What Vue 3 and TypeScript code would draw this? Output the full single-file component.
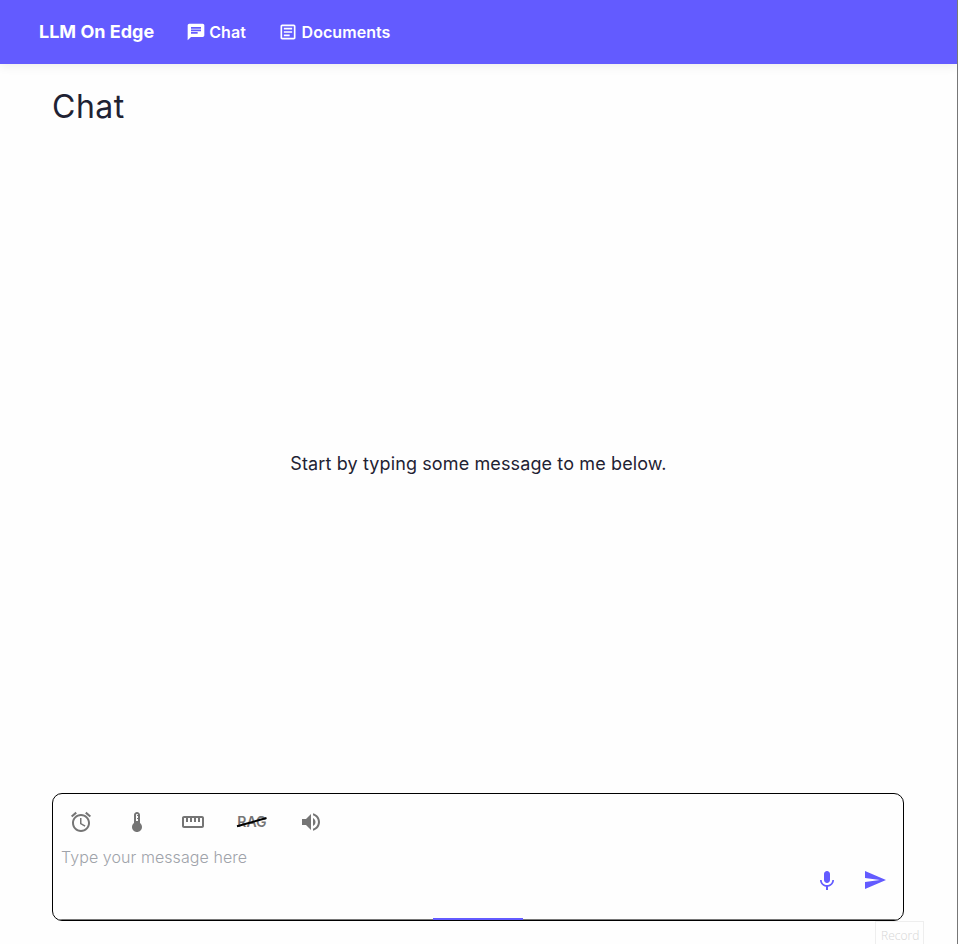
<script setup lang="ts">
import { ref } from 'vue'

interface NavItem {
  label: string
  icon: string
}

interface Tool {
  name: string
  icon: string
}

const navItems: NavItem[] = [
  {
    label: 'Chat',
    icon: 'M20 2H4c-1.1 0-1.99.9-1.99 2L2 22l4-4h14c1.1 0 2-.9 2-2V4c0-1.1-.9-2-2-2zM6 9h12v2H6V9zm8 5H6v-2h8v2zm4-6H6V6h12v2z',
  },
  {
    label: 'Documents',
    icon: 'M19 5v14H5V5h14m0-2H5c-1.1 0-2 .9-2 2v14c0 1.1.9 2 2 2h14c1.1 0 2-.9 2-2V5c0-1.1-.9-2-2-2zM14 17H7v-2h7v2zm3-4H7v-2h10v2zm0-4H7V7h10v2z',
  },
]

const tools: Tool[] = [
  {
    name: 'alarm',
    icon: 'M22 5.72l-4.6-3.86-1.29 1.53 4.6 3.86L22 5.72zM7.88 3.39L6.6 1.86 2 5.71l1.29 1.53 4.59-3.85zM12.5 8H11v6l4.75 2.85.75-1.23-4-2.37V8zM12 4c-4.97 0-9 4.03-9 9s4.02 9 9 9c4.97 0 9-4.03 9-9s-4.03-9-9-9zm0 16c-3.87 0-7-3.13-7-7s3.13-7 7-7 7 3.13 7 7-3.13 7-7 7z',
  },
  {
    name: 'temperature',
    icon: 'M15 13V5c0-1.66-1.34-3-3-3S9 3.34 9 5v8c-1.21.91-2 2.37-2 4 0 2.76 2.24 5 5 5s5-2.24 5-5c0-1.63-.79-3.09-2-4zm-4-8c0-.55.45-1 1-1s1 .45 1 1h-1v1h1v2h-1v1h1v2h-2V5z',
  },
  {
    name: 'length',
    icon: 'M21 6H3c-1.1 0-2 .9-2 2v8c0 1.1.9 2 2 2h18c1.1 0 2-.9 2-2V8c0-1.1-.9-2-2-2zm0 10H3V8h2v4h2V8h2v4h2V8h2v4h2V8h2v4h2V8h2v8z',
  },
  { name: 'rag', icon: '' },
  {
    name: 'volume',
    icon: 'M3 9v6h4l5 5V4L7 9H3zm13.5 3c0-1.77-1.02-3.29-2.5-4.03v8.05c1.48-.73 2.5-2.25 2.5-4.02zM14 3.23v2.06c2.89.86 5 3.54 5 6.71s-2.11 5.85-5 6.71v2.06c4.01-.91 7-4.49 7-8.77s-2.99-7.86-7-8.77z',
  },
]

const message = ref<string>('')
</script>

<template>
  <div class="page">
    <header class="bar">
      <span class="brand">LLM On Edge</span>
      <nav class="nav">
        <a v-for="item in navItems" :key="item.label" class="nav-link">
          <svg viewBox="0 0 24 24" class="nav-icon"><path :d="item.icon" /></svg>
          <span>{{ item.label }}</span>
        </a>
      </nav>
    </header>

    <main class="content">
      <h1 class="title">Chat</h1>
      <section class="empty">Start by typing some message to me below.</section>

      <section class="composer">
        <div class="tools">
          <button v-for="tool in tools" :key="tool.name" class="tool" :class="tool.name" type="button">
            <svg v-if="tool.icon" viewBox="0 0 24 24" class="icon"><path :d="tool.icon" /></svg>
            <template v-else>
              <span>RAG</span>
              <svg viewBox="0 0 32 14" class="strike"><path d="M1 11.3 30.5 3" /></svg>
            </template>
          </button>
        </div>
        <div class="entry">
          <textarea v-model="message" class="input" placeholder="Type your message here"></textarea>
          <div class="actions">
            <button class="action mic" type="button">
              <svg viewBox="0 0 24 24" class="icon">
                <path d="M12 14c1.66 0 2.99-1.34 2.99-3L15 5c0-1.66-1.34-3-3-3S9 3.34 9 5v6c0 1.66 1.34 3 3 3zm5.3-3c0 3-2.54 5.1-5.3 5.1S6.7 14 6.7 11H5c0 3.41 2.72 6.23 6 6.72V21h2v-3.28c3.28-.48 6-3.3 6-6.72h-1.7z" />
              </svg>
            </button>
            <button class="action" type="button">
              <svg viewBox="0 0 24 24" class="icon"><path d="M2.01 21 23 12 2.01 3 2 10l15 2-15 2z" /></svg>
            </button>
          </div>
        </div>
        <div class="track"><span class="progress"></span></div>
      </section>
      <div class="tooltip">Record</div>
    </main>
  </div>
</template>

<style>
body {
  background: #fefefe;
  overflow: hidden;
}
</style>

<style scoped>
.page {
  position: relative;
  box-sizing: border-box;
  width: 100%;
  height: 944px;
  display: flex;
  flex-direction: column;
  overflow: hidden;
  border-right: 1px solid #777;
  color: #1f2233;
  font-family: Inter, sans-serif;
}
.bar {
  flex: none;
  height: 64px;
  box-sizing: border-box;
  padding-left: 39px;
  display: flex;
  align-items: center;
  background: #635bff;
  color: #fff;
  box-shadow: 0 2px 10px rgba(0, 0, 0, 0.08);
}
.brand {
  width: 147px;
  font-size: 18px;
  line-height: 24px;
  font-weight: 700;
  white-space: nowrap;
}
.nav {
  display: flex;
  gap: 32.5px;
}
.nav-link {
  display: flex;
  align-items: center;
  gap: 3.2px;
  font-size: 16px;
  line-height: 24px;
  font-weight: 600;
  letter-spacing: 0.06px;
}
.nav-icon {
  width: 20px;
  height: 20px;
  fill: currentColor;
}
.content {
  flex: 1;
  display: flex;
  flex-direction: column;
  padding: 22px 53px 0 52px;
}
.title {
  margin: 0;
  font-size: 32px;
  line-height: 42px;
  font-weight: 400;
  letter-spacing: 0.5px;
}
.empty {
  box-sizing: border-box;
  height: 665px;
  padding: 6px 0 0 1px;
  display: flex;
  align-items: center;
  justify-content: center;
  font-size: 18px;
  line-height: 26px;
  letter-spacing: 0.12px;
}
.composer {
  box-sizing: border-box;
  width: 852px;
  height: 128px;
  display: flex;
  flex-direction: column;
  overflow: hidden;
  border: 1px solid #000;
  border-radius: 10px;
}
.tools {
  height: 40px;
  padding: 8px 0 0 8px;
  display: flex;
  gap: 16px;
}
button {
  border: 0;
  padding: 0;
  background: none;
  font: inherit;
}
.tool {
  position: relative;
  width: 40px;
  height: 40px;
  display: flex;
  align-items: center;
  justify-content: center;
  color: #757575;
}
.tool.rag {
  width: 46px;
  box-sizing: border-box;
  padding-bottom: 2px;
  font-size: 14px;
  font-weight: 600;
}
.strike {
  position: absolute;
  left: 7px;
  top: 13px;
  width: 32px;
  height: 14px;
  fill: none;
  stroke: #000;
  stroke-width: 2;
}
.icon {
  width: 24px;
  height: 24px;
  fill: currentColor;
}
.entry {
  height: 76px;
  display: flex;
  justify-content: space-between;
}
.input {
  flex: 1;
  height: 60px;
  box-sizing: border-box;
  margin: 0;
  padding: 3px 8px;
  border: 0;
  outline: 0;
  resize: none;
  background: none;
  color: #1f2233;
  font: 300 16px/24px Inter, sans-serif;
  letter-spacing: 0.07px;
}
.input::placeholder {
  color: #9fa3aa;
}
.actions {
  display: flex;
  gap: 8px;
  padding: 18px 8px 0 0;
}
.action {
  width: 40px;
  height: 40px;
  display: flex;
  align-items: center;
  justify-content: center;
  color: #635bff;
}
.action.mic {
  box-sizing: border-box;
  padding-top: 2px;
}
.track {
  height: 2px;
  display: flex;
  align-items: flex-start;
  justify-content: center;
  background: linear-gradient(transparent 50%, #777 50%);
}
.progress {
  width: 90px;
  height: 2px;
  background: #635bff;
}
.tooltip {
  position: absolute;
  left: 875px;
  top: 921px;
  width: 49px;
  height: 30px;
  box-sizing: border-box;
  padding: 5px 0 0 5px;
  border: 1px solid #eee;
  color: #d6d6d6;
  font: 300 12px/17px "Open Sans", sans-serif;
}
</style>
